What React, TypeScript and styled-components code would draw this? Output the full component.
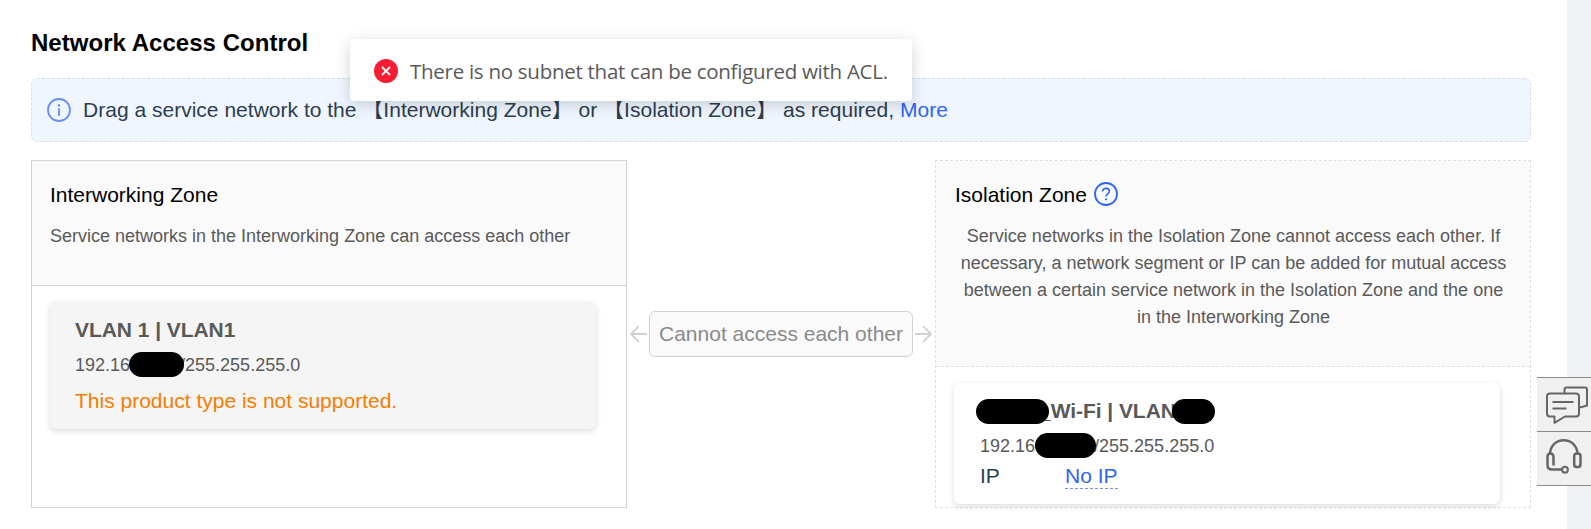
import React from "react";
import styled, { createGlobalStyle } from "styled-components";

const GlobalStyle = createGlobalStyle`
  * { box-sizing: border-box; }
  html, body { margin: 0; padding: 0; }
  body {
    background: #fff;
    font-family: "Liberation Sans", Arial, "Noto Sans CJK SC", sans-serif;
    color: #2c3e50;
    overflow: hidden;
  }
`;

const Page = styled.div`
  position: relative;
  display: flex;
  width: 1591px;
  height: 529px;
  overflow: hidden;
`;

const Main = styled.main`
  flex: 1;
  display: flex;
  flex-direction: column;
  padding: 27px 36px 21px 31px;
  background: #fff;
`;

const Gutter = styled.div`
  width: 24px;
  background: #f0f1f3;
`;

const Title = styled.h1`
  margin: 0;
  height: 32px;
  line-height: 32px;
  font-size: 24px;
  font-weight: 700;
  letter-spacing: 0.03px;
  color: #000;
  white-space: nowrap;
`;

const Banner = styled.div`
  display: flex;
  align-items: flex-start;
  gap: 12px;
  height: 64px;
  margin-top: 19px;
  padding: 19px 15px 0;
  border: 1px dashed #d5dfec;
  border-radius: 6px;
  background: #f0f6ff;
`;

const BannerText = styled.p`
  margin: 0;
  line-height: 24px;
  font-size: 21px;
  letter-spacing: 0.013px;
  color: #2c3e50;
  white-space: pre;
`;

const Link = styled.a`
  color: #2e64f5;
`;

const Zones = styled.div`
  display: flex;
  height: 348px;
  margin-top: 18px;
`;

const Zone = styled.section<{ $dashed?: boolean }>`
  display: flex;
  flex-direction: column;
  width: 596px;
  border: 1px ${(p) => (p.$dashed ? "dashed #e0e0e0" : "solid #d3d3d3")};
`;

const ZoneHeader = styled.header<{ $dashed?: boolean; $height: number }>`
  height: ${(p) => p.$height}px;
  padding: 19px 18px 0 ${(p) => (p.$dashed ? 19 : 18)}px;
  border-bottom: 1px ${(p) => (p.$dashed ? "dashed #e0e0e0" : "solid #d3d3d3")};
  background: #fafafa;
`;

const ZoneTitle = styled.h2`
  display: flex;
  align-items: center;
  gap: 7px;
  margin: 0;
  height: 30px;
  font-size: 21px;
  font-weight: 400;
  color: #000;

  svg {
    margin-bottom: 2px;
  }
`;

const ZoneDesc = styled.p<{ $center?: boolean }>`
  margin: 13px 0 0;
  line-height: 27px;
  font-size: 18px;
  color: #595959;
  text-align: ${(p) => (p.$center ? "center" : "left")};
`;

const Card = styled.article<{ $muted?: boolean }>`
  width: 546px;
  height: ${(p) => (p.$muted ? 127 : 121)}px;
  margin: 16px 0 0 18px;
  padding: 12px 25px 0 ${(p) => (p.$muted ? 25 : 26)}px;
  border-radius: 6px;
  background: ${(p) => (p.$muted ? "#f5f5f5" : "#fff")};
  box-shadow: 0 2px 6px rgba(0, 0, 0, 0.14);
`;

const CardTitle = styled.h3`
  display: flex;
  align-items: center;
  margin: 0;
  height: 32px;
  font-size: 21px;
  letter-spacing: -0.05px;
  color: #595959;
  white-space: pre;
`;

const CardAddress = styled.div`
  display: flex;
  align-items: center;
  height: 37px;
  padding-top: 2px;
  font-size: 18px;
  color: #595959;
`;

const Redaction = styled.span<{ $width: number; $left?: number; $right?: number; $lift?: number }>`
  position: relative;
  flex: none;
  width: ${(p) => p.$width}px;
  height: 25px;
  margin: 0 ${(p) => p.$right ?? 0}px ${(p) => p.$lift ?? 0}px ${(p) => p.$left ?? 0}px;
  border-radius: 13px;
  background: #000;
`;

const Warning = styled.div`
  line-height: 36px;
  font-size: 21px;
  color: #f57c00;
`;

const IpRow = styled.div`
  display: flex;
  align-items: flex-start;
  font-size: 21px;
  line-height: 24px;
`;

const IpLabel = styled.span`
  width: 85px;
`;

const IpLink = styled.a`
  height: 25px;
  color: #2e64f5;
  border-bottom: 1px dashed #6d93f8;
`;

const Between = styled.div`
  flex: 1;
  display: flex;
  align-items: center;
  justify-content: center;
  gap: 2px;
`;

const BetweenLabel = styled.div`
  width: 264px;
  height: 46px;
  border: 1px solid #d3d3d3;
  border-radius: 6px;
  background: #fafafa;
  color: #8a8a8a;
  font-size: 21px;
  line-height: 44px;
  text-align: center;
  white-space: nowrap;
`;

const Toast = styled.div`
  position: absolute;
  left: 350px;
  top: 39px;
  display: flex;
  align-items: center;
  gap: 12px;
  width: 562px;
  height: 62px;
  padding: 2px 0 0 24px;
  border-radius: 4px;
  background: #fff;
  box-shadow: 0 4px 16px rgba(0, 0, 0, 0.17);
`;

const ToastText = styled.span`
  font-family: "Open Sans", "Noto Sans", sans-serif;
  font-size: 20.5px;
  letter-spacing: -0.27px;
  color: #595959;
  white-space: nowrap;
`;

const FloatBar = styled.aside`
  position: absolute;
  right: 0;
  top: 377px;
  width: 54px;
  border-top: 1px solid #8c8c8c;
`;

const FloatButton = styled.div`
  height: 54px;
  border-bottom: 1px solid #8c8c8c;
  background: #f0f0f0;
`;

const Arrow = ({ flip = false }: { flip?: boolean }) => (
  <svg width="17" height="18" viewBox="0 0 17 18" fill="none" stroke="#d0d0d0" strokeWidth="1.8">
    <path d={flip ? "M0 9H16M8.2 1.2L16 9L8.2 16.8" : "M17 9H1M8.8 1.2L1 9L8.8 16.8"} />
  </svg>
);

const InfoIcon = () => (
  <svg width="24" height="24" viewBox="0 0 24 24" fill="none">
    <circle cx="12" cy="12" r="11" stroke="#6590f8" strokeWidth="1.8" />
    <path d="M12 10.2V18" stroke="#6590f8" strokeWidth="1.8" />
    <circle cx="12" cy="7.3" r="1.2" fill="#6590f8" />
  </svg>
);

const HelpIcon = () => (
  <svg width="24" height="24" viewBox="0 0 24 24" fill="none" stroke="#2e64f5" strokeWidth="1.8">
    <circle cx="12" cy="12" r="11" />
    <path d="M8.6 9.6C8.6 7.4 10 6.4 12 6.4S15.4 7.5 15.4 9.3C15.4 11.6 12 12 12 14.6" strokeWidth="1.6" />
    <circle cx="12" cy="17.3" r="1.1" fill="#2e64f5" stroke="none" />
  </svg>
);

const ErrorIcon = () => (
  <svg width="24" height="24" viewBox="0 0 24 24">
    <circle cx="12" cy="12" r="12" fill="#f81d32" />
    <path d="M8 8L16 16M16 8L8 16" stroke="#fff" strokeWidth="1.8" />
  </svg>
);

const ChatIcon = () => (
  <svg width="54" height="53" viewBox="0 0 54 53" fill="none" stroke="#666" strokeWidth="2" strokeLinejoin="round">
    <path d="M27.5 15.5V11.5Q27.5 9.5 29.5 9.5H48Q50 9.5 50 11.5V27.5L46.5 28.5L42.5 29.5" />
    <path d="M12.5 15.5H39Q42 15.5 42 18.5V35.5Q42 38.5 39 38.5H28L17.5 44.8V38.5H13Q10 38.5 10 35.5V18.5Q10 15.5 13 15.5Z" />
    <path d="M15.5 24H36.5M15.5 30.5H29.5" strokeWidth="1.8" />
  </svg>
);

const HeadsetIcon = () => (
  <svg width="54" height="53" viewBox="0 0 54 53" fill="none" stroke="#666" strokeWidth="2.5">
    <path d="M13 22.5C13 3.5 40.5 3.5 40.5 22.5" />
    <path d="M16.5 33.5V25Q16.5 21.5 13.2 21.5Q10.5 21.5 10.5 25V33Q10.5 37.5 15 37.5H25" />
    <rect x="37.2" y="21.5" width="6.3" height="13.5" rx="2.6" />
    <circle cx="28" cy="37.7" r="2.9" strokeWidth="2" />
  </svg>
);

export default function App() {
  return (
    <>
      <GlobalStyle />
      <Page>
        <Main>
          <Title>Network Access Control</Title>
          <Banner>
            <InfoIcon />
            <BannerText>
              Drag a service network to the 【Interworking Zone】 or 【Isolation Zone】 as required, <Link>More</Link>
            </BannerText>
          </Banner>
          <Zones>
            <Zone>
              <ZoneHeader $height={125}>
                <ZoneTitle>Interworking Zone</ZoneTitle>
                <ZoneDesc>Service networks in the Interworking Zone can access each other</ZoneDesc>
              </ZoneHeader>
              <Card $muted>
                <CardTitle>VLAN 1 | VLAN1</CardTitle>
                <CardAddress>
                  192.16
                  <Redaction $width={55} $left={-1} $right={-4} $lift={2} />
                  /255.255.255.0
                </CardAddress>
                <Warning>This product type is not supported.</Warning>
              </Card>
            </Zone>
            <Between>
              <Arrow />
              <BetweenLabel>Cannot access each other</BetweenLabel>
              <Arrow flip />
            </Between>
            <Zone $dashed>
              <ZoneHeader $dashed $height={206}>
                <ZoneTitle>
                  Isolation Zone
                  <HelpIcon />
                </ZoneTitle>
                <ZoneDesc $center>
                  Service networks in the Isolation Zone cannot access each other. If necessary, a network segment or
                  IP can be added for mutual access between a certain service network in the Isolation Zone and the one
                  in the Interworking Zone
                </ZoneDesc>
              </ZoneHeader>
              <Card>
                <CardTitle>
                  <Redaction $width={73} $left={-4} $right={-10} />
                  _Wi-Fi | VLAN
                  <Redaction $width={43} $left={-4} />
                </CardTitle>
                <CardAddress>
                  192.16
                  <Redaction $width={61} $left={0} $right={-2} $lift={2} />
                  /255.255.255.0
                </CardAddress>
                <IpRow>
                  <IpLabel>IP</IpLabel>
                  <IpLink>No IP</IpLink>
                </IpRow>
              </Card>
            </Zone>
          </Zones>
        </Main>
        <Gutter />
        <FloatBar>
          <FloatButton>
            <ChatIcon />
          </FloatButton>
          <FloatButton>
            <HeadsetIcon />
          </FloatButton>
        </FloatBar>
        <Toast>
          <ErrorIcon />
          <ToastText>There is no subnet that can be configured with ACL.</ToastText>
        </Toast>
      </Page>
    </>
  );
}
